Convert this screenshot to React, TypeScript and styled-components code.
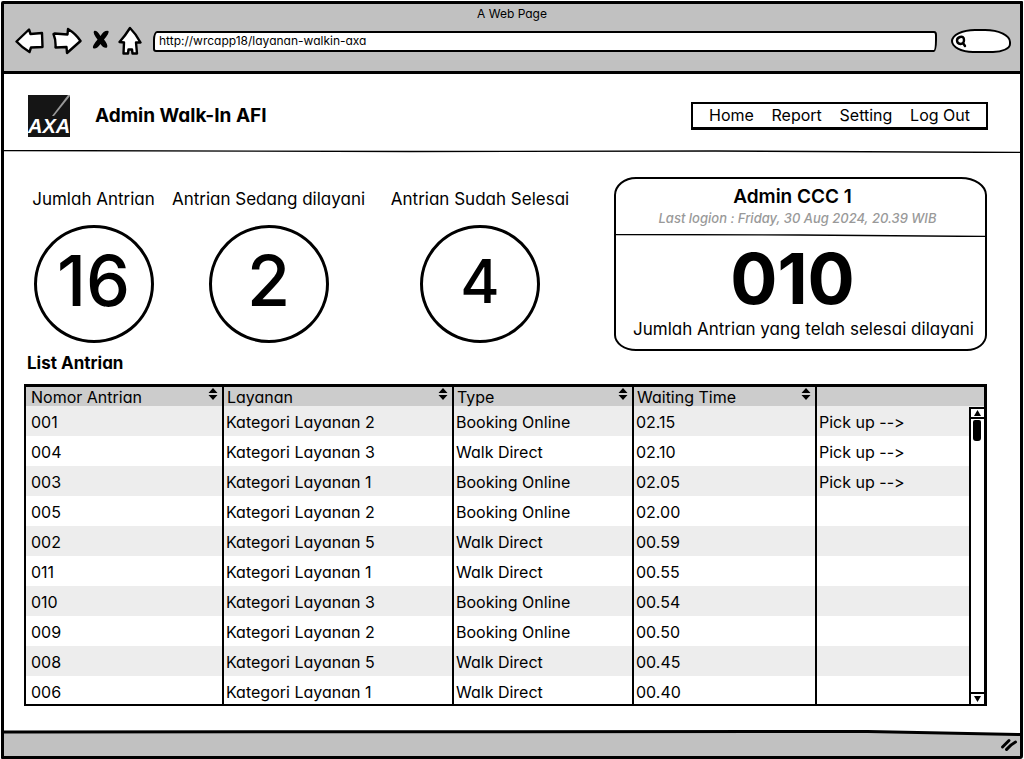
import React from 'react';
import styled, { createGlobalStyle } from 'styled-components';

const INK = '#000';
const CHROME = '#c1c1c1';

const GlobalStyle = createGlobalStyle`
  *, *::before, *::after { box-sizing: border-box; }
  body {
    margin: 0;
    background: #fff;
    color: ${INK};
    font-family: Inter, "Liberation Sans", sans-serif;
    font-feature-settings: "cv11" 1, "calt" 0;
    font-size: 16px;
    line-height: 20px;
  }
  h1, h2, p { margin: 0; }
  button, input { font: inherit; color: inherit; font-feature-settings: inherit; }
  svg { display: block; }
`;

const Page = styled.div`
  min-height: 100vh;
  padding: 1px 1px 2px;
  display: flex;
`;

const BrowserWindow = styled.div`
  flex: 1;
  min-width: 0;
  display: flex;
  flex-direction: column;
  border: 3px solid ${INK};
  border-radius: 2px 1px 3px 1px;
`;

const Chrome = styled.div`
  height: 70px;
  background: ${CHROME};
  border-bottom: 3px solid ${INK};
`;

const WindowTitle = styled.div`
  height: 19px;
  text-align: center;
  font-size: 12px;
  line-height: 19px;
`;

const Toolbar = styled.div`
  display: flex;
  align-items: center;
  height: 36px;
  padding: 0 9px 0 11px;
`;

const ToolButtons = styled.div`
  display: flex;
  align-items: center;
  gap: 8px;
  margin-right: 11px;
`;

const IconButton = styled.button`
  border: 0;
  padding: 0;
  background: none;
`;

const AddressBar = styled.input`
  flex: 1;
  min-width: 0;
  height: 21px;
  padding: 0 4px 2px;
  border: 2px solid ${INK};
  border-radius: 4px 3px 3px 3px / 9px 4px 12px 3px;
  background: #fff;
  font-size: 12px;
  outline: 0;
`;

const SearchBox = styled.label`
  display: flex;
  align-items: center;
  width: 60px;
  height: 24px;
  margin-left: 14px;
  padding-left: 2px;
  border: 2px solid ${INK};
  border-radius: 24px 26px 18px 22px / 12px 13px 9px 12px;
  background: #fff;
`;

const SearchInput = styled.input`
  width: 36px;
  height: 16px;
  padding: 0 2px;
  border: 0;
  background: none;
  outline: 0;
  font-size: 12px;
`;

const Header = styled.header`
  display: flex;
  align-items: center;
  height: 76px;
  padding: 8px 32px 0 24px;
`;

const AppTitle = styled.h1`
  margin-left: 25px;
  font-size: 19px;
  font-weight: 700;
`;

const Nav = styled.nav`
  display: flex;
  align-items: center;
  justify-content: space-between;
  width: 297px;
  height: 28px;
  margin-left: auto;
  padding: 0 16px 2px;
  border: 2px solid ${INK};
  border-bottom-width: 3px;
`;

const NavLink = styled.a`
  color: inherit;
  font-size: 16px;
  text-decoration: none;
`;

const SketchLine = styled.svg`
  width: 100%;
  height: ${(p: { $height: number }) => p.$height}px;
  flex: none;
`;

const Main = styled.main`
  flex: 1;
  padding: 24px 33px 24px 20px;
`;

const Summary = styled.div`
  display: flex;
  align-items: flex-start;
  height: 174px;
`;

const Stats = styled.div`
  flex: 1;
  display: grid;
  grid-template-columns: 139fr 211fr 212fr;
  margin-right: 28px;
  padding-top: 12px;
`;

const Stat = styled.div`
  display: flex;
  flex-direction: column;
  align-items: center;
  gap: 16px;
  white-space: nowrap;
`;

const Caption = styled.p`
  font-size: 17px;
`;

const StatCircle = styled.div<{ $small?: boolean }>`
  display: flex;
  align-items: center;
  justify-content: center;
  width: 120px;
  height: 118px;
  padding-bottom: 6px;
  border: 3px solid ${INK};
  border-radius: 50%;
  font-size: ${(p) => (p.$small ? 60 : 70)}px;
  font-weight: 500;
`;

const Card = styled.section`
  display: flex;
  flex-direction: column;
  align-items: center;
  width: 373px;
  height: 174px;
  padding-top: 8px;
  border: 2px solid ${INK};
  border-radius: 22px 26px 20px 22px / 18px 18px 16px 16px;
  white-space: nowrap;
`;

const CardTitle = styled.h2`
  font-size: 19px;
  font-weight: 600;
  padding-right: 16px;
`;

const LastLogin = styled.p`
  margin: 1px 6px 6px 0;
  color: #999;
  font-size: 13px;
  font-weight: 500;
  font-style: italic;
`;

const Served = styled.p`
  padding: 2px 16px 0 0;
  font-size: 70px;
  font-weight: 700;
  line-height: 80px;
`;

const CardCaption = styled(Caption)`
  padding-left: 6px;
`;

const ListTitle = styled.h2`
  margin: 2px 0 11px 3px;
  font-size: 17px;
  font-weight: 700;
`;

const TableFrame = styled.div`
  position: relative;
  height: 322px;
  overflow: hidden;
  border: 3px solid ${INK};
  border-left-width: 2px;
  border-bottom-width: 2px;
`;

const Table = styled.table`
  width: 100%;
  table-layout: fixed;
  border-collapse: collapse;
`;

const HeadCell = styled.th<{ $width?: number }>`
  width: ${(p) => (p.$width ? `${p.$width}px` : 'auto')};
  height: 19px;
  padding: 0 4px 0 3px;
  border-right: 2px solid ${INK};
  background: #ccc;
  font-weight: 400;
  line-height: 19px;
  text-align: left;
  &:first-child { padding-left: 5px; }
  &:last-child { border-right: 0; }
`;

const SortButton = styled.button`
  display: flex;
  justify-content: space-between;
  width: 100%;
  height: 19px;
  padding: 0;
  border: 0;
  background: none;
  line-height: 20px;
  svg { margin-top: 1px; }
`;

const Row = styled.tr`
  height: 30px;
  &:nth-child(odd) { background: #ededed; }
`;

const Cell = styled.td`
  padding: 2px 2px 0;
  border-right: 2px solid ${INK};
  white-space: nowrap;
  &:first-child { padding-left: 5px; }
  &:last-child { border-right: 0; }
`;

const PickLink = styled.a`
  color: inherit;
  text-decoration: none;
`;

const ScrollBar = styled.div`
  position: absolute;
  top: 20px;
  right: 0;
  bottom: 0;
  display: flex;
  flex-direction: column;
  width: 15px;
  border-left: 2px solid ${INK};
  background: #fff;
`;

const ScrollButton = styled.button<{ $end?: boolean }>`
  display: flex;
  align-items: center;
  justify-content: center;
  height: 12px;
  padding: 0;
  border: 0 solid ${INK};
  border-width: ${(p) => (p.$end ? '2px 0 0' : '2px 0')};
  background: #fff;
`;

const Thumb = styled.div`
  width: 8px;
  height: 21px;
  margin: 1px 0 auto 2px;
  border-radius: 2px 2px 3px 3px;
  background: ${INK};
`;

const Footer = styled.footer`
  display: flex;
  justify-content: flex-end;
  align-items: center;
  height: 20px;
  padding: 0 2px 3px 0;
  background: ${CHROME};
`;

const stroke = { stroke: INK, strokeWidth: 2.4, strokeLinejoin: 'round', strokeLinecap: 'round' } as const;

const BackIcon = () => (
  <svg width="29" height="28" viewBox="15 23 29 28" fill="#fff" {...stroke}>
    <path d="M16.500 37.500 L29 25.500 L30.500 30 L42 29 L42.500 43 L31 43.500 L29.500 48 Q22 43.500 16.500 37.500Z" />
  </svg>
);

const ForwardIcon = () => (
  <svg width="30" height="28" viewBox="52 23 30 28" fill="#fff" {...stroke}>
    <path d="M54.500 29.500 L67.500 30.500 L68 25 Q76 30 80.500 37 L67 49 L66.500 43 L55.500 43.500 Q56 36 53.500 30Z" />
  </svg>
);

const StopIcon = () => (
  <svg width="20" height="22" viewBox="91 26 20 22" fill={INK}>
    <path d="M95 27 Q98 26 101.500 32 Q105 26 109.500 27 Q110.500 29 105 35.500 Q109.500 41 108 43.500 Q105 45 101.500 40 Q97 46 94 44 Q93 42 98.500 35.500 Q93.500 29 95 27Z" />
  </svg>
);

const HomeIcon = () => (
  <svg width="24" height="30" viewBox="118 22 24 30" fill="#fff" {...stroke}>
    <path d="M130 24 Q136 30 140.500 38.500 L136 38.500 L137 49.500 L132.500 49.500 L132 45.500 L128.500 45.500 L128 49.500 L123.500 49.500 L124 38.500 L119.500 38 Q125 32 130 24Z" />
  </svg>
);

const SearchIcon = () => (
  <svg width="12" height="13" viewBox="0 0 12 13" fill="none" {...stroke}>
    <path d="M5 2 Q9 1 9 5 Q9 9 5.500 9 Q2 8.500 2 5.500 Q2 3 5 2Z M8 8 L10 11" />
  </svg>
);

const SortIcon = () => (
  <svg width="10" height="12" viewBox="0 0 10 12" fill={INK}>
    <path d="M5 0 L9.500 5 H0.500Z M0.500 7 H9.500 L5 12Z" />
  </svg>
);

const ResizeGrip = () => (
  <svg width="18" height="15" viewBox="0 0 18 15" fill="none" stroke={INK} strokeWidth="3" strokeLinecap="round">
    <path d="M2.500 10 L9 3.500 M6.500 12.500 Q10 8 15.500 5" />
  </svg>
);

const Logo = () => (
  <svg width="42" height="42" viewBox="0 0 42 42" role="img" aria-label="AXA">
    <rect width="42" height="42" fill="#151515" />
    <path d="M24 21 L40 0 H42 V1 L26 21Z" fill="#999" />
    <text x="0" y="38" fill="#fff" fontFamily="'Liberation Sans Narrow', 'Liberation Sans', sans-serif" fontSize="20" fontWeight="700" fontStyle="italic">AXA</text>
  </svg>
);

const stats = [
  { label: 'Jumlah Antrian', value: 16 },
  { label: 'Antrian Sedang dilayani', value: 2 },
  { label: 'Antrian Sudah Selesai', value: 4, small: true },
];

const columns = [
  { label: 'Nomor Antrian', width: 197 },
  { label: 'Layanan', width: 230 },
  { label: 'Type', width: 180 },
  { label: 'Waiting Time', width: 183 },
];

const rows: [string, string, string, string, boolean][] = [
  ['001', 'Kategori Layanan 2', 'Booking Online', '02.15', true],
  ['004', 'Kategori Layanan 3', 'Walk Direct', '02.10', true],
  ['003', 'Kategori Layanan 1', 'Booking Online', '02.05', true],
  ['005', 'Kategori Layanan 2', 'Booking Online', '02.00', false],
  ['002', 'Kategori Layanan 5', 'Walk Direct', '00.59', false],
  ['011', 'Kategori Layanan 1', 'Walk Direct', '00.55', false],
  ['010', 'Kategori Layanan 3', 'Booking Online', '00.54', false],
  ['009', 'Kategori Layanan 2', 'Booking Online', '00.50', false],
  ['008', 'Kategori Layanan 5', 'Walk Direct', '00.45', false],
  ['006', 'Kategori Layanan 1', 'Walk Direct', '00.40', false],
];

export default function App() {
  return (
    <Page>
      <GlobalStyle />
      <BrowserWindow>
        <Chrome>
          <WindowTitle>A Web Page</WindowTitle>
          <Toolbar>
            <ToolButtons>
              <IconButton aria-label="Back"><BackIcon /></IconButton>
              <IconButton aria-label="Forward"><ForwardIcon /></IconButton>
              <IconButton aria-label="Stop"><StopIcon /></IconButton>
              <IconButton aria-label="Home page"><HomeIcon /></IconButton>
            </ToolButtons>
            <AddressBar aria-label="Address" defaultValue="http://wrcapp18/layanan-walkin-axa" />
            <SearchBox>
              <SearchIcon />
              <SearchInput aria-label="Search" />
            </SearchBox>
          </Toolbar>
        </Chrome>

        <Header>
          <Logo />
          <AppTitle>Admin Walk-In AFI</AppTitle>
          <Nav>
            {['Home', 'Report', 'Setting', 'Log Out'].map((item) => (
              <NavLink key={item} href="#">{item}</NavLink>
            ))}
          </Nav>
        </Header>
        <SketchLine $height={3} viewBox="0 0 100 3" preserveAspectRatio="none" aria-hidden="true">
          <path d="M0 0.500 L40 1.500 L70 1 L100 2.500" fill="none" stroke={INK} strokeWidth="1.400" vectorEffect="non-scaling-stroke" />
        </SketchLine>

        <Main>
          <Summary>
            <Stats>
              {stats.map((s) => (
                <Stat key={s.label}>
                  <Caption>{s.label}</Caption>
                  <StatCircle $small={s.small}>{s.value}</StatCircle>
                </Stat>
              ))}
            </Stats>
            <Card>
              <CardTitle>Admin CCC 1</CardTitle>
              <LastLogin>Last logion : Friday, 30 Aug 2024, 20.39 WIB</LastLogin>
              <SketchLine $height={3} viewBox="0 0 100 3" preserveAspectRatio="none" aria-hidden="true">
                <path d="M0 0.500 L50 1 L100 2.500" fill="none" stroke={INK} strokeWidth="1.400" vectorEffect="non-scaling-stroke" />
              </SketchLine>
              <Served>010</Served>
              <CardCaption>Jumlah Antrian yang telah selesai dilayani</CardCaption>
            </Card>
          </Summary>

          <ListTitle>List Antrian</ListTitle>
          <TableFrame>
            <Table>
              <thead>
                <tr>
                  {columns.map((c) => (
                    <HeadCell key={c.label} $width={c.width} scope="col">
                      <SortButton>{c.label}<SortIcon /></SortButton>
                    </HeadCell>
                  ))}
                  <HeadCell aria-label="Action" />
                </tr>
              </thead>
              <tbody>
                {rows.map(([no, service, type, wait, pick]) => (
                  <Row key={no}>
                    <Cell>{no}</Cell>
                    <Cell>{service}</Cell>
                    <Cell>{type}</Cell>
                    <Cell>{wait}</Cell>
                    <Cell>{pick && <PickLink href="#">{'Pick up -->'}</PickLink>}</Cell>
                  </Row>
                ))}
              </tbody>
            </Table>
            <ScrollBar>
              <ScrollButton aria-label="Scroll up">
                <svg width="7" height="6" viewBox="0 0 7 6"><path d="M3.500 0 L7 6 H0Z" /></svg>
              </ScrollButton>
              <Thumb />
              <ScrollButton $end aria-label="Scroll down">
                <svg width="7" height="6" viewBox="0 0 7 6"><path d="M0 0 H7 L3.500 6Z" /></svg>
              </ScrollButton>
            </ScrollBar>
          </TableFrame>
        </Main>

        <SketchLine $height={6} viewBox="0 0 100 6" preserveAspectRatio="none" aria-hidden="true">
          <path d="M0 2 L85 2 L100 4.500 V6 H0Z" fill={CHROME} />
          <path d="M0 2 L85 1.500 L100 4.500" fill="none" stroke={INK} strokeWidth="3" vectorEffect="non-scaling-stroke" />
        </SketchLine>
        <Footer><ResizeGrip /></Footer>
      </BrowserWindow>
    </Page>
  );
}
